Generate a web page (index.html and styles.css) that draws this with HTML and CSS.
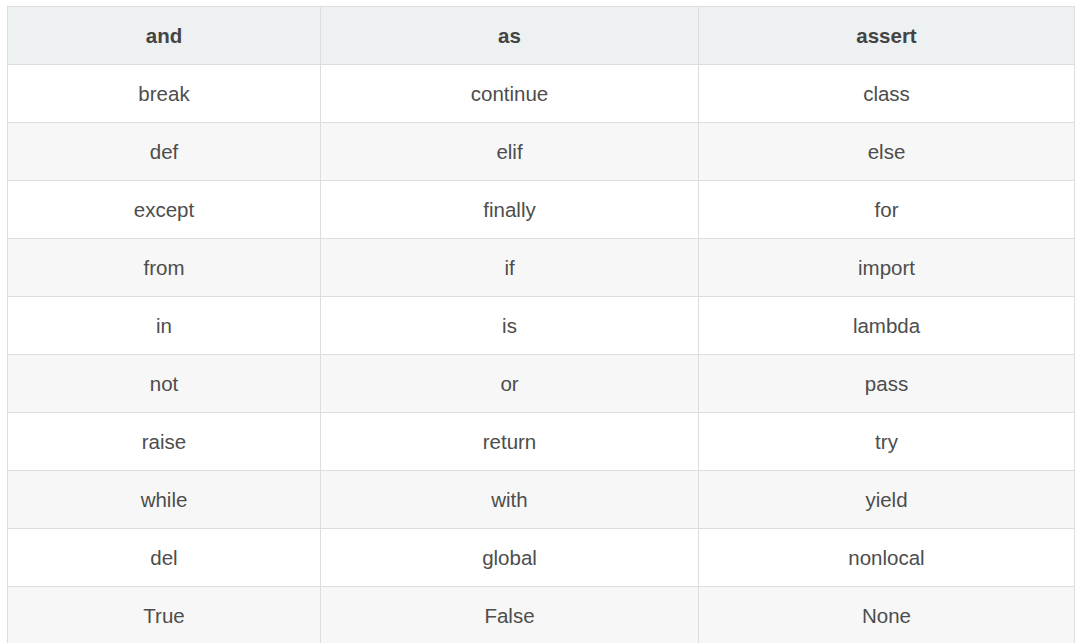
FILE: index.html
```html
<!DOCTYPE html>
<html>
<head>
<meta charset="utf-8">
<link rel="stylesheet" href="styles.css">
</head>
<body>
<table class="kw">
<colgroup><col class="c1"><col class="c2"><col class="c3"></colgroup>
<thead>
<tr><th>and</th><th>as</th><th>assert</th></tr>
</thead>
<tbody>
<tr><td>break</td><td>continue</td><td>class</td></tr>
<tr><td>def</td><td>elif</td><td>else</td></tr>
<tr><td>except</td><td>finally</td><td>for</td></tr>
<tr><td>from</td><td>if</td><td>import</td></tr>
<tr><td>in</td><td>is</td><td>lambda</td></tr>
<tr><td>not</td><td>or</td><td>pass</td></tr>
<tr><td>raise</td><td>return</td><td>try</td></tr>
<tr><td>while</td><td>with</td><td>yield</td></tr>
<tr><td>del</td><td>global</td><td>nonlocal</td></tr>
<tr><td>True</td><td>False</td><td>None</td></tr>
</tbody>
</table>
</body>
</html>
```
FILE: styles.css
```css
html, body {
  margin: 0;
  padding: 0;
  background: #fff;
}
body {
  padding: 6px 0 0 7px;
  font-family: "Liberation Sans", Arial, sans-serif;
  color: #4d4d4d;
}
.kw {
  border-collapse: collapse;
  table-layout: fixed;
  width: 1067px;
  font-size: 20.5px;
}
.c1 { width: 313px; }
.c2 { width: 378px; }
.c3 { width: 376px; }
.kw th, .kw td {
  border: 1px solid #ddd;
  height: 57px;
  padding: 0 8px;
  text-align: center;
  vertical-align: middle;
}
.kw th {
  background: #eef1f2;
  font-weight: bold;
  color: #444;
}
.kw tbody tr:nth-child(even) td {
  background: #f7f7f7;
}
```
